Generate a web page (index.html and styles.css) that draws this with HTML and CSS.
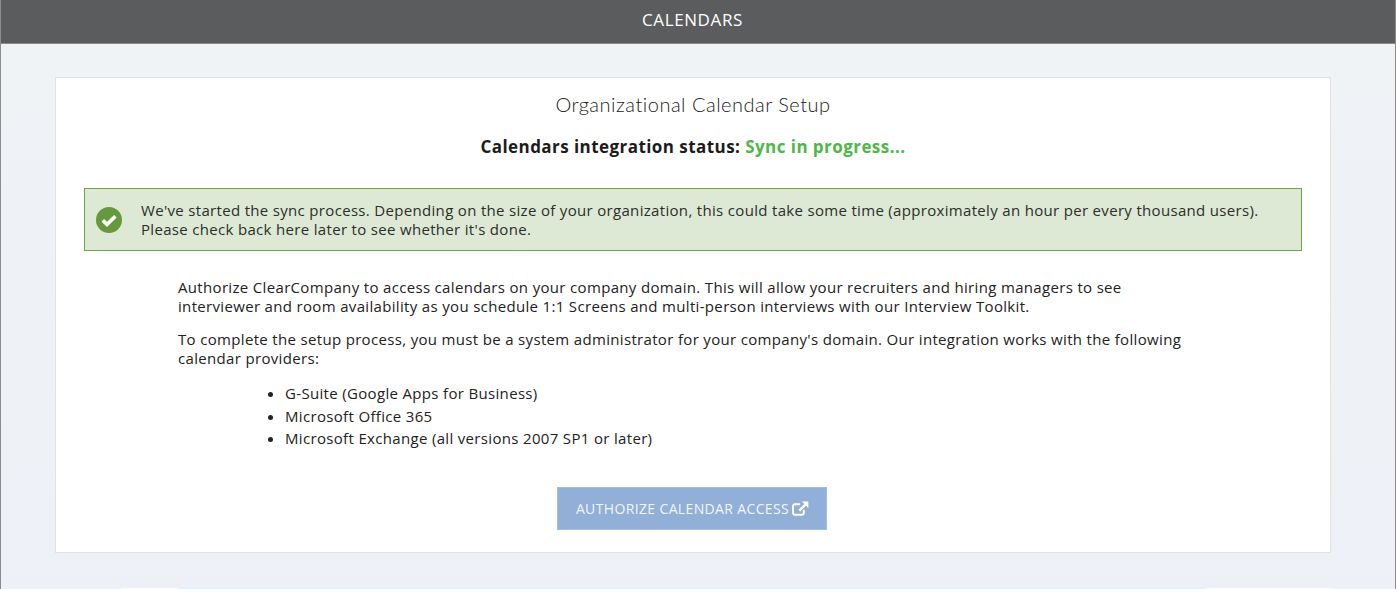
FILE: index.html
```html
<!DOCTYPE html>
<html lang="en">
<head>
<meta charset="utf-8">
<title>Calendars</title>
<link rel="stylesheet" href="styles.css">
</head>
<body>
<div class="frame">
  <header class="topbar">CALENDARS</header>
  <main class="content">
    <section class="card">
      <h1 class="title">Organizational Calendar Setup</h1>
      <p class="status">Calendars integration status: <span class="status-value">Sync in progress...</span></p>
      <div class="alert">
        <svg class="alert-icon" viewBox="0 0 26 26" aria-hidden="true">
          <circle cx="13" cy="13" r="13" fill="#659a3c"/>
          <path d="M6.8 13.4 L11 17.4 L19.4 9.2" fill="none" stroke="#fff" stroke-width="3.6"/>
        </svg>
        <p class="alert-text">We've started the sync process. Depending on the size of your organization, this could take some time (approximately an hour per every thousand users). Please check back here later to see whether it's done.</p>
      </div>
      <div class="body-copy">
        <p class="para">Authorize ClearCompany to access calendars on your company domain. This will allow your recruiters and hiring managers to see interviewer and room availability as you schedule 1:1 Screens and multi-person interviews with our Interview Toolkit.</p>
        <p class="para">To complete the setup process, you must be a system administrator for your company's domain. Our integration works with the following calendar providers:</p>
        <ul class="providers">
          <li>G-Suite (Google Apps for Business)</li>
          <li>Microsoft Office 365</li>
          <li>Microsoft Exchange (all versions 2007 SP1 or later)</li>
        </ul>
      </div>
      <div class="actions">
        <button class="btn" type="button">AUTHORIZE CALENDAR ACCESS
          <svg class="btn-icon" viewBox="0 0 18 16" aria-hidden="true">
            <path d="M12.5 9.2V12.6A2 2 0 0 1 10.5 14.6H3A2 2 0 0 1 1 12.6V5.4A2 2 0 0 1 3 3.4H8.6" fill="none" stroke="#fff" stroke-width="2"/>
            <path d="M10.6 0.6H17.4V7.4L14.9 5L8.6 11.2L6.8 9.4L13.1 3.1Z" fill="#fff"/>
          </svg>
        </button>
      </div>
    </section>
    <div class="next-row"><div class="next-inner"></div></div>
  </main>
</div>
</body>
</html>
```
FILE: styles.css
```css
* { box-sizing: border-box; }
html, body { margin: 0; padding: 0; height: 100%; overflow: hidden; }
body { font-family: "Open Sans", sans-serif; color: #222; background: #eef2f5; }
.frame {
  height: 589px;
  border-left: 1px solid #8c8c8c;
  border-right: 1px solid #8c8c8c;
  display: flex;
  flex-direction: column;
  overflow: hidden;
}
.topbar {
  height: 44px;
  flex: none;
  padding-right: 11px;
  background: #5b5c5e;
  border-bottom: 1px solid #8a8b8d;
  color: #fff;
  font-size: 17px;
  letter-spacing: 0.6px;
  line-height: 40px;
  text-align: center;
}
.content {
  flex: 1;
  padding: 33px 64px 0 54px;
  background: linear-gradient(#eff3f6, #edf0f6);
}
.card {
  height: 476px;
  background: #fff;
  border: 1px solid #e0e2e4;
  padding: 0 28px;
}
.title {
  margin: 14px 0 0;
  font-family: "Lato", sans-serif;
  font-weight: 300;
  font-size: 20px;
  letter-spacing: 0.5px;
  line-height: 24px;
  text-align: center;
  color: #222;
}
.status {
  margin: 19px 0 0;
  font-size: 17px;
  letter-spacing: 0.44px;
  font-weight: 700;
  line-height: 24px;
  text-align: center;
  color: #1c1c1c;
}
.status-value { color: #4db848; }
.alert {
  margin-top: 29px;
  height: 63px;
  display: flex;
  align-items: center;
  gap: 19px;
  padding: 0 11px;
  background: #dde9d5;
  border: 1px solid #6da544;
}
.alert-icon { width: 26px; height: 26px; flex: none; }
.alert-text { margin: 0; font-size: 15px; letter-spacing: 0.32px; line-height: 19px; color: #2a2f2a; }
.body-copy { padding: 0 110px 0 94px; margin-top: 27px; font-size: 15px; letter-spacing: 0.33px; line-height: 18.5px; color: #222; }
.para { margin: 0 0 15px; }
.providers { margin: 0; padding: 0 0 0 107px; line-height: 22.5px; }
.actions { display: flex; justify-content: center; margin-top: 37px; padding-right: 2px; }
.btn {
  height: 43px;
  width: 270px;
  padding: 0 0 0 1px;
  font-family: "Open Sans", sans-serif;
  font-size: 14px;
  letter-spacing: 0.36px;
  color: #f2f6fb;
  background: #91afd7;
  border: 1px solid #9dbde6;
  display: flex;
  align-items: center;
  justify-content: center;
  gap: 3px;
}
.btn-icon { width: 17px; height: 15px; }
.next-row { margin: 35px -1px 0 67px; height: 10px; background: #fff; padding: 0 126px 0 56px; }
.next-inner { height: 100%; background: #dcefff; }
```
